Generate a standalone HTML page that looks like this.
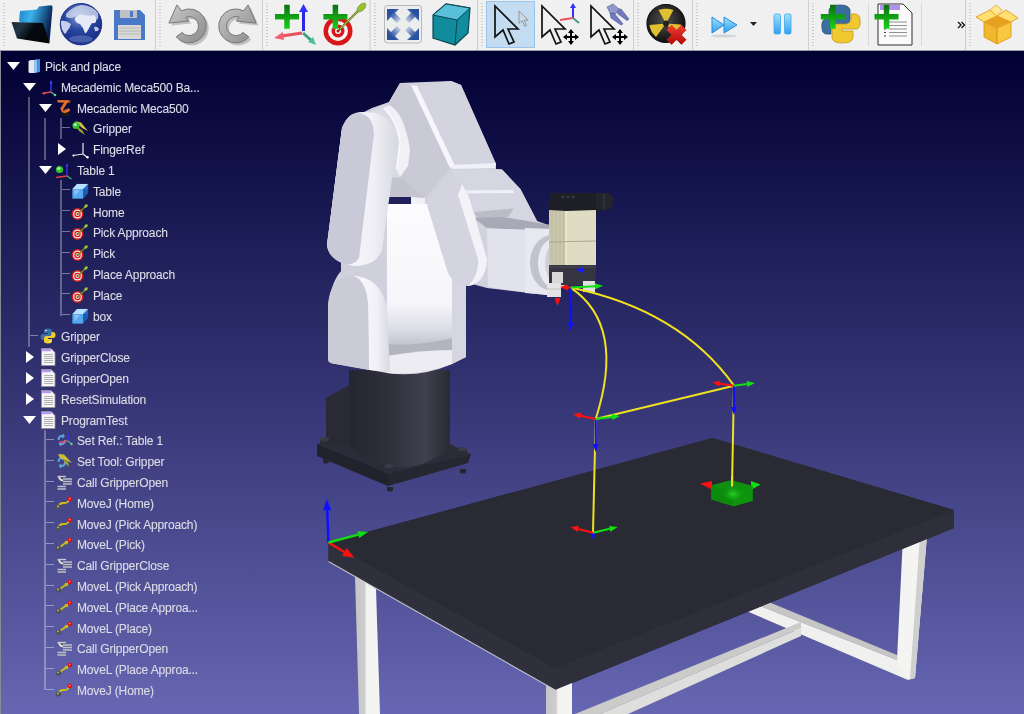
<!DOCTYPE html>
<html><head><meta charset="utf-8">
<style>
html,body{margin:0;padding:0;}
body{width:1024px;height:714px;overflow:hidden;position:relative;background:#f0f0f0;font-family:"Liberation Sans",sans-serif;}
#tb{position:absolute;left:0;top:0;width:1024px;height:50px;background:#f0f0f0;}
#vp{position:absolute;left:0;top:51px;width:1024px;height:663px;background:linear-gradient(#000033,#6666b2);}
#vpl{position:absolute;left:0;top:51px;width:1px;height:663px;background:#8a8a96;}
#vpt{position:absolute;left:0;top:50px;width:1024px;height:1px;background:#9a9aa6;}
.r{will-change:transform;position:absolute;height:20px;font-size:12px;letter-spacing:-0.15px;color:#dcdce6;-webkit-text-stroke:0.12px #dcdce6;white-space:nowrap;line-height:20px;}
.ln{position:absolute;background:rgba(255,255,255,0.4);}
svg{position:absolute;overflow:visible;}
</style></head><body>
<div id="tb">
<svg style="left:0;top:0" width="1024" height="50"><defs><radialGradient id="glb" cx="0.45" cy="0.3" r="0.75"><stop offset="0" stop-color="#8aa0d8"/><stop offset="0.45" stop-color="#2a48a0"/><stop offset="0.85" stop-color="#1a3088"/><stop offset="1" stop-color="#2a48a8"/></radialGradient><linearGradient id="fold" x1="0" y1="0" x2="1" y2="0.3"><stop offset="0" stop-color="#2080c8"/><stop offset="0.4" stop-color="#3ab4ec"/><stop offset="1" stop-color="#082050"/></linearGradient><linearGradient id="foldf" x1="0" y1="0" x2="1" y2="0.4"><stop offset="0" stop-color="#1a2a3a"/><stop offset="0.3" stop-color="#223444"/><stop offset="0.6" stop-color="#060a10"/><stop offset="1" stop-color="#04060a"/></linearGradient><linearGradient id="und" x1="0" y1="0" x2="1" y2="1"><stop offset="0" stop-color="#c8c8c8"/><stop offset="1" stop-color="#8a8a8a"/></linearGradient><linearGradient id="und2" x1="1" y1="0" x2="0" y2="1"><stop offset="0" stop-color="#c8c8c8"/><stop offset="1" stop-color="#8a8a8a"/></linearGradient><linearGradient id="pls" x1="0" y1="0" x2="0" y2="1"><stop offset="0" stop-color="#0a7010"/><stop offset="1" stop-color="#18d018"/></linearGradient><linearGradient id="cub" x1="0" y1="0" x2="0" y2="1"><stop offset="0" stop-color="#60c8e0"/><stop offset="1" stop-color="#108aa0"/></linearGradient><linearGradient id="ff" x1="0" y1="0" x2="0" y2="1"><stop offset="0" stop-color="#a0e0ff"/><stop offset="1" stop-color="#30a0f0"/></linearGradient><linearGradient id="box" x1="0" y1="0" x2="0" y2="1"><stop offset="0" stop-color="#ffe890"/><stop offset="1" stop-color="#f0b020"/></linearGradient><linearGradient id="fa1" x1="0" y1="0" x2="1" y2="1"><stop offset="0.3" stop-color="#2850a0"/><stop offset="1" stop-color="#2850a0" stop-opacity="0"/></linearGradient><linearGradient id="fa2" x1="1" y1="0" x2="0" y2="1"><stop offset="0.3" stop-color="#2850a0"/><stop offset="1" stop-color="#2850a0" stop-opacity="0"/></linearGradient><linearGradient id="fa3" x1="0" y1="1" x2="1" y2="0"><stop offset="0.3" stop-color="#2850a0"/><stop offset="1" stop-color="#2850a0" stop-opacity="0"/></linearGradient><linearGradient id="fa4" x1="1" y1="1" x2="0" y2="0"><stop offset="0.3" stop-color="#2850a0"/><stop offset="1" stop-color="#2850a0" stop-opacity="0"/></linearGradient><linearGradient id="xr" x1="0" y1="0" x2="0" y2="1"><stop offset="0" stop-color="#f04030"/><stop offset="1" stop-color="#b00808"/></linearGradient><radialGradient id="rad" cx="0.45" cy="0.4" r="0.6"><stop offset="0" stop-color="#505050"/><stop offset="1" stop-color="#101010"/></radialGradient></defs><path d="M155.5 0V50" stroke="#cfcfcf" stroke-width="1"/><path d="M262.5 0V50" stroke="#cfcfcf" stroke-width="1"/><path d="M370 0V50" stroke="#cfcfcf" stroke-width="1"/><path d="M477.5 0V50" stroke="#cfcfcf" stroke-width="1"/><path d="M633.5 0V50" stroke="#cfcfcf" stroke-width="1"/><path d="M692.5 0V50" stroke="#cfcfcf" stroke-width="1"/><path d="M808.5 0V50" stroke="#cfcfcf" stroke-width="1"/><path d="M965.5 0V50" stroke="#cfcfcf" stroke-width="1"/><path d="M868.5 3V46" stroke="#d8d8d8" stroke-width="1"/><path d="M921.5 3V46" stroke="#d8d8d8" stroke-width="1"/><path d="M4 3V46" stroke="#a8a8a8" stroke-width="1" stroke-dasharray="1 2"/><path d="M160 3V46" stroke="#a8a8a8" stroke-width="1" stroke-dasharray="1 2"/><path d="M267 3V46" stroke="#a8a8a8" stroke-width="1" stroke-dasharray="1 2"/><path d="M375 3V46" stroke="#a8a8a8" stroke-width="1" stroke-dasharray="1 2"/><path d="M482 3V46" stroke="#a8a8a8" stroke-width="1" stroke-dasharray="1 2"/><path d="M638 3V46" stroke="#a8a8a8" stroke-width="1" stroke-dasharray="1 2"/><path d="M697 3V46" stroke="#a8a8a8" stroke-width="1" stroke-dasharray="1 2"/><path d="M813 3V46" stroke="#a8a8a8" stroke-width="1" stroke-dasharray="1 2"/><path d="M970 3V46" stroke="#a8a8a8" stroke-width="1" stroke-dasharray="1 2"/><path d="M20 11L37 9.5L39 6.5L51 5.3Q53 5.5 52.5 8L49.5 43L19 21Z" fill="url(#fold)"/><path d="M11.5 22L43 23L49.5 43.5L17 38.5Z" fill="url(#foldf)"/><circle cx="81" cy="24.2" r="20.7" fill="url(#glb)" stroke="#20308a" stroke-width="1"/><path d="M66 14Q72 7 81 5Q92 5 98 13Q99 18 97 20Q94 16 90 17Q87 19 84 17Q79 14 75 17Q70 19 66 17Z" fill="#dce2f4" opacity="0.75"/><path d="M75 18Q79 13 84 15Q90 16 94 15Q97 18 96 22Q94 24 92 23Q90 26 88 30Q86 34 85 33Q83 27 80 24Q76 23 75 20Z" fill="#e6eaf6"/><path d="M61 21Q66 20 71 24Q70 28 67 31Q66 35 64 33Q61 29 61 24Z" fill="#c8d0ec"/><path d="M94 27Q97 26 99 29Q98 32 95 31Z" fill="#c0c8e8"/><ellipse cx="81" cy="39" rx="12" ry="3.5" fill="#7088c8" opacity="0.5"/><path d="M114 10H140L145 15V40H114Z" fill="#4a78c8"/><rect x="120" y="10" width="17" height="8" fill="#c0c0c0"/><rect x="130" y="11" width="3" height="6" fill="#4a78c8"/><rect x="118" y="25" width="23" height="14" fill="#d8d8d8"/><path d="M119 28H140M119 31H140M119 34H140" stroke="#b0b0b0" stroke-width="0.8"/><path transform="translate(2.5,2.5)" d="M176.9 4.9L168.9 23.1L188.8 21L185.8 17.1A9.5 9.5 0 1 1 182 32.5L176.2 36.8A17 17 0 1 0 181.5 10.8Z" fill="#b4b4b4" opacity="0.8"/><path d="M176.9 4.9L168.9 23.1L188.8 21L185.8 17.1A9.5 9.5 0 1 1 182 32.5L176.2 36.8A17 17 0 1 0 181.5 10.8Z" fill="url(#und)" stroke="#787878" stroke-width="1"/><g transform="translate(427.5,2.5) scale(-1,1)"><path d="M176.9 4.9L168.9 23.1L188.8 21L185.8 17.1A9.5 9.5 0 1 1 182 32.5L176.2 36.8A17 17 0 1 0 181.5 10.8Z" fill="#b4b4b4" opacity="0.8"/></g><g transform="translate(425,0) scale(-1,1)"><path d="M176.9 4.9L168.9 23.1L188.8 21L185.8 17.1A9.5 9.5 0 1 1 182 32.5L176.2 36.8A17 17 0 1 0 181.5 10.8Z" fill="url(#und2)" stroke="#787878" stroke-width="1"/></g><path d="M303.5 31V10" stroke="#2828e8" stroke-width="3"/><path d="M303.5 4L299 12H308Z" fill="#3030ff"/><path d="M302 33L282 36" stroke="#e85060" stroke-width="3"/><path d="M274 38L283 32L284 40Z" fill="#f06070"/><path d="M303 33L312 41" stroke="#40a080" stroke-width="3"/><path d="M316 45L308 42L313 37Z" fill="#50c090"/><path d="M284.25 4.800000000000001H289.75V14.05H299V19.55H289.75V28.8H284.25V19.55H275V14.05H284.25Z" fill="url(#pls)"/><circle cx="338" cy="31" r="14.5" fill="#d81818"/><circle cx="338" cy="31" r="10" fill="#f4f4f4"/><circle cx="338" cy="31" r="6.5" fill="#d81818"/><circle cx="338" cy="31" r="3" fill="#f4f4f4"/><circle cx="338" cy="31" r="1.5" fill="#c01010"/><path d="M339 30L359 10" stroke="#405020" stroke-width="2.2"/><path d="M340 29L359 10" stroke="#a0c040" stroke-width="1.2"/><ellipse cx="361.5" cy="7.5" rx="5.5" ry="3" transform="rotate(-45 361.5 7.5)" fill="#98c030" stroke="#6a8a20" stroke-width="0.6"/><path d="M332.65 4.800000000000001H338.15V14.05H347.4V19.55H338.15V28.8H332.65V19.55H323.4V14.05H332.65Z" fill="url(#pls)"/><rect x="384.5" y="5.5" width="37" height="37.5" rx="3" fill="#eceeee" stroke="#b8b8b8"/><path d="M387 9H399L395 13L401 19L397 23L391 17L387 21Z" fill="url(#fa1)"/><path d="M419 9H407L411 13L405 19L409 23L415 17L419 21Z" fill="url(#fa2)"/><path d="M387 40H399L395 36L401 30L397 26L391 32L387 28Z" fill="url(#fa3)"/><path d="M419 40H407L411 36L405 30L409 26L415 32L419 28Z" fill="url(#fa4)"/><path d="M433 15L446 4L470 8L468 33L455 45L433 38Z" fill="#108c9c" stroke="#0a4850" stroke-width="1.2"/><path d="M433 15L446 4L470 8L457 20Z" fill="#58c0d8" stroke="#0a4850" stroke-width="1"/><path d="M457 20L455 45" stroke="#0a4850" stroke-width="1"/><rect x="486.5" y="1.5" width="48" height="46" fill="#c4dcf2" stroke="#99c4ec"/><path transform="translate(495,6) scale(1)" d="M0 0L0 31L8 24L14 38L19 36L13 23L23 23Z" fill="none" stroke="#111" stroke-width="1.7" stroke-linejoin="miter"/><path transform="translate(519,11) scale(0.4)" d="M0 0L0 31L8 24L14 38L19 36L13 23L23 23Z" fill="#d0d8e0" stroke="#808890" stroke-width="2"/><path transform="translate(542,6) scale(1)" d="M0 0L0 31L8 24L14 38L19 36L13 23L23 23Z" fill="none" stroke="#111" stroke-width="1.7" stroke-linejoin="miter"/><path d="M573 18V6" stroke="#3030ff" stroke-width="2"/><path d="M573 3L570 8H576Z" fill="#3030ff"/><path d="M573 18L560 20" stroke="#e85060" stroke-width="2"/><path d="M573 18L579 23" stroke="#40a080" stroke-width="2"/><path transform="translate(591,6) scale(1)" d="M0 0L0 31L8 24L14 38L19 36L13 23L23 23Z" fill="none" stroke="#111" stroke-width="1.7" stroke-linejoin="miter"/><path d="M616 9L621 9L629 19L627 20.5L618 14Z" fill="#7078c0" stroke="#505890" stroke-width="0.6"/><path d="M610 13L614 13L623 24L621 25L611 18Z" fill="#7078c0" stroke="#505890" stroke-width="0.6"/><path d="M607 7L613 4L619 9L616 13.5L610 13Z" fill="#9098cc" stroke="#505890" stroke-width="0.6"/><path d="M564 37H578M571 30V44" stroke="#000" stroke-width="2"/><path d="M563 37L567 34V40Z M579 37L575 34V40Z M571 29L568 33H574Z M571 45L568 41H574Z" fill="#000"/><path d="M613 37H627M620 30V44" stroke="#000" stroke-width="2"/><path d="M612 37L616 34V40Z M628 37L624 34V40Z M620 29L617 33H623Z M620 45L617 41H623Z" fill="#000"/><circle cx="666" cy="23.5" r="19" fill="url(#rad)"/><path d="M666 23.5L658.5 10Q666 7.5 673.5 10Z M666 23.5L681 24.5Q680.5 32 676 37Z M666 23.5L656 37Q650.5 32 649.5 25Z" fill="#e0c030"/><circle cx="666" cy="23.5" r="19" fill="none" stroke="#111" stroke-width="1.2"/><circle cx="666" cy="23.5" r="3" fill="#222"/><polygon points="681.4,44.8 666.5,29.9 671.6,24.8 686.5,39.7" fill="url(#xr)"/><polygon points="686.5,29.9 671.6,44.8 666.5,39.7 681.4,24.8" fill="url(#xr)"/><path d="M712 17L724 25L712 33Z M724 17L737 25L724 33Z" fill="url(#ff)" stroke="#2a8ad8" stroke-width="1"/><ellipse cx="724" cy="36" rx="13" ry="1.5" fill="#c8c8c8" opacity="0.7"/><path d="M750 22H757L753.5 26Z" fill="#222"/><rect x="774" y="14" width="6.5" height="20" rx="1.5" fill="url(#ff)" stroke="#40a8e8" stroke-width="0.8"/><rect x="784.5" y="14" width="6.5" height="20" rx="1.5" fill="url(#ff)" stroke="#40a8e8" stroke-width="0.8"/><path d="M840 5Q830 5 829 10V17H840V19H825Q821 21 822 28Q822 34 827 34H831V28Q832 24 836 24H846Q850 23 850 19V10Q849 5 840 5Z" fill="#3a6ea0" stroke="#28507a" stroke-width="0.8"/><path d="M842 43Q852 43 853 38V31H842V29H857Q861 27 860 20Q860 14 855 14H851V20Q850 24 846 24H836Q832 25 832 29V38Q833 43 842 43Z" fill="#f0c830" stroke="#c09820" stroke-width="0.8"/><path d="M830.05 4.800000000000001H835.55V14.05H844.8V19.55H835.55V28.8H830.05V19.55H820.8V14.05H830.05Z" fill="url(#pls)"/><path d="M878 4H903L912 13V45H878Z" fill="#fafafa" stroke="#303030" stroke-width="1"/><rect x="880" y="5" width="20" height="5" fill="#b090f0"/><path d="M889 22H907M889 25.5H907M889 29H907M889 32.5H907M889 36H907" stroke="#909090" stroke-width="1.2"/><path d="M884 29H886M884 32.5H886M884 36H886" stroke="#404040" stroke-width="1.2"/><path d="M883.75 4.800000000000001H889.25V14.05H898.5V19.55H889.25V28.8H883.75V19.55H874.5V14.05H883.75Z" fill="url(#pls)"/><path d="M958 22L961 25L958 28M961.5 22L964.5 25L961.5 28" stroke="#111" stroke-width="1.3" fill="none"/><path d="M984 22L997 28V44L984 37Z" fill="#f0b830" stroke="#e09010" stroke-width="0.8"/><path d="M997 28L1011 22V37L997 44Z" fill="#f8c840" stroke="#e09010" stroke-width="0.8"/><path d="M984 22L997 16L1011 22L997 28Z" fill="#e8a020"/><path d="M984 22L976 17L990 10L997 16Z M1011 22L1018 18L1006 10L997 16Z" fill="#ffe070" stroke="#e09010" stroke-width="0.8"/><path d="M990 10L996 5L1002 10L997 16Z" fill="#ffe890" stroke="#e09010" stroke-width="0.6"/></svg>
</div>
<div id="vp"></div>
<div id="vpt"></div>
<div id="vpl"></div>
<svg width="1024" height="714" style="left:0;top:0"><defs><linearGradient id="cyl" x1="0" x2="1" y1="0" y2="0"><stop offset="0" stop-color="#262632"/><stop offset="0.35" stop-color="#2e2e3a"/><stop offset="0.75" stop-color="#40404e"/><stop offset="1" stop-color="#2a2a36"/></linearGradient><linearGradient id="legL" x1="0" x2="1"><stop offset="0" stop-color="#c4c4c4"/><stop offset="0.4" stop-color="#cfcfcf"/><stop offset="0.45" stop-color="#f2f2f0"/><stop offset="1" stop-color="#f4f4f2"/></linearGradient><linearGradient id="scyl" x1="0" x2="0" y1="0" y2="1"><stop offset="0" stop-color="#fcfcfe"/><stop offset="0.7" stop-color="#f6f6fa"/><stop offset="0.9" stop-color="#dcdce6"/><stop offset="1" stop-color="#c4c4d0"/></linearGradient></defs><polygon points="730,586 897,655 902,662 730,594" fill="#c6c6c4" /><polygon points="730,594 902,662 908,680 730,604" fill="#f0f0ee" /><polygon points="903,536 927,536 915,678 908,680 897,660" fill="#f4f4f2" /><polygon points="920,536 927,536 915,678 910,679" fill="#cfcfcd" /><polygon points="801,622 575,714 600,714 801,628" fill="#cbcbc9" /><polygon points="801,628 600,714 628,714 801,636" fill="#dededc" /><polygon points="328.5,542.5 712.5,438 954,510 954,528 555,690 328.5,561.5" fill="#30303c" /><polygon points="328.5,542.5 555,668 555,690 328.5,561.5" fill="#30303c" /><polygon points="555,668 954,510 954,528 555,690" fill="#2f2f3b" /><polygon points="328.5,542.5 712.5,438 954,510 555,668" fill="#2a2a35" /><path d="M328.5 561.5L555 690" stroke="#d8d8e0" stroke-width="1.1" opacity="0.85"/><polygon points="355,576 376,589 380,714 359,714" fill="url(#legL)" /><polygon points="546,685 555,690 572,683 572,714 546,714" fill="url(#legL)" /><polygon points="317,444 400,420 471,454 388,473" fill="#2c2c38" /><polygon points="317,444 388,473 388,486 317,456" fill="#22222c" /><polygon points="388,473 471,454 468,463 388,486" fill="#262630" /><polygon points="326,398 349,385 349,446 326,444" fill="#2a2a34" /><path d="M349 370V446Q400 488 450 448V370Z" fill="url(#cyl)"/><path d="M320.0 445V439H329.0V445Z" fill="#2c2c38"/><ellipse cx="324.5" cy="445" rx="4.5" ry="2" fill="#2c2c38"/><ellipse cx="324.5" cy="439" rx="4.5" ry="2" fill="#3a3a48"/><path d="M384.5 472V466H393.5V472Z" fill="#2c2c38"/><ellipse cx="389" cy="472" rx="4.5" ry="2" fill="#2c2c38"/><ellipse cx="389" cy="466" rx="4.5" ry="2" fill="#3a3a48"/><path d="M458.0 455V449H467.0V455Z" fill="#2c2c38"/><ellipse cx="462.5" cy="455" rx="4.5" ry="2" fill="#2c2c38"/><ellipse cx="462.5" cy="449" rx="4.5" ry="2" fill="#3a3a48"/><path d="M323 459V462H329V459Z" fill="#262630"/><ellipse cx="326" cy="462" rx="3" ry="1.5" fill="#262630"/><path d="M387 487V490H393V487Z" fill="#262630"/><ellipse cx="390" cy="490" rx="3" ry="1.5" fill="#262630"/><path d="M460 469V472H466V469Z" fill="#262630"/><ellipse cx="463" cy="472" rx="3" ry="1.5" fill="#262630"/><path d="M342 128L350 116L362 113L372 108L389 102L400 83L451 81L461 85L496 164L496 169L502 169.6L520.4 189L537 221L551 226L551 295L545 295L487 288L476 285L466 283L466 357L452 364Q420 378 387 373L331 363L328 358L328 305Q332 280 342 270L341 261Q327 252 327 245Z" fill="#d2d2de"/><polygon points="341,250 385,250 387,320 341,320" fill="#d0d0dc" /><polygon points="448,280 466,284 466,357 452,364 448,360" fill="#d6d6e2" /><path d="M387 204H452V338Q420 346 387 344Z" fill="url(#scyl)"/><path d="M387 344Q420 346 452 338V350Q420 358 387 358Z" fill="#b4b4c0"/><path d="M387 356Q420 350 452 350V364Q420 376 387 373Z" fill="#ececf2"/><polygon points="389,178 401,177 425,198 389,198" fill="#c4c4d0" /><polygon points="388,197 411,197 411,204 388,204" fill="#20205a" /><polygon points="411,197 425,198 425,204 411,204" fill="#f0f0f6" /><polygon points="400,83 414,87 451,166 450,168 425,198 401,177 389,102" fill="#cacad6" /><path d="M371 111Q380 106 389 105Q404 112 410 150L408 166L400 177L386 176Z" fill="#dadae4"/><path d="M384 108Q396 120 400 143L396.5 169L400 177L408 166L410 150Q404 112 389 105Z" fill="#f0f0f6"/><path d="M384 108Q398 122 400 143L396.5 169" stroke="#fafaff" stroke-width="1.5" fill="none"/><polygon points="414,87 451,81 461,85 496,164 494,168 452,168" fill="#d4d4e0" /><polygon points="411,85 417,86 455,166 450,168" fill="#f6f6fc" /><polygon points="452,165 496,163 495,168 452,169" fill="#f0f0f8" /><polygon points="452,170 502,169.6 520.4,189 537,221 474,220 460,200" fill="#d6d6e2" /><polygon points="462,190.5 513,190 514,193 464,193.5" fill="#f0f0f8" /><polygon points="474,212 514,208.5 508,217 478,219" fill="#bcbcc8" /><polygon points="474,218 503,217 551,225 551,230 488,229" fill="#a8a8b6" /><polygon points="487,228 525,230 525,292 488,287" fill="#e2e2ec" /><polygon points="525,228 551,229 551,295 525,293" fill="#e8e8f0" /><ellipse cx="552" cy="263" rx="22" ry="28" fill="#c2c2ce"/><ellipse cx="555" cy="263" rx="17" ry="25" fill="#eaeaf2"/><ellipse cx="557" cy="263" rx="12" ry="21" fill="#d0d0da"/><ellipse cx="559" cy="263" rx="9" ry="18" fill="#f0f0f6"/><path d="M452 176Q436 184 427 205L447 270Q452 286 468 286Q486 283 487 259L470 200Q462 180 452 176Z" fill="#d4d4e0"/><path d="M462 184Q466 190 470 200L487 259Q486 283 468 286Q479 276 478 259L458 195Z" fill="#f2f2f8"/><defs><linearGradient id="rim" x1="0" x2="1"><stop offset="0" stop-color="#fafafe"/><stop offset="0.65" stop-color="#f0f0f6"/><stop offset="1" stop-color="#d8d8e2"/></linearGradient></defs><path d="M342 128Q348 112 362 112L376 113Q393 118 397 143L382 250Q376 266 354 266Q330 262 327 245Z" fill="url(#rim)"/><path d="M342 128Q348 112 360 113Q373 116 374 134L359 258Q354 266 344 264Q328 258 327 245Z" fill="#c9c9d7"/><path d="M352 276Q380 276 387 308L390 372L369 370L368 305Q366 278 352 276Z" fill="url(#rim)"/><path d="M328 360L328 305Q330 277 352 276Q366 278 368 305L369 370L335 364Q328 363 328 360Z" fill="#cbcbd8"/><polygon points="550,193 600,193 600,212 550,212" fill="#1e1e26" /><path d="M596 193H606Q613 193 613 201Q613 210 606 210H596Z" fill="#24242c"/><path d="M604 194V209" stroke="#3a3a44" stroke-width="1.2"/><circle cx="563" cy="197" r="1.3" fill="#40404a"/><circle cx="568" cy="197" r="1.3" fill="#40404a"/><circle cx="573" cy="197" r="1.3" fill="#40404a"/><polygon points="549,210 566,211 566,265 549,265" fill="#cbc7ac" /><path d="M552 211V265M556 211V265M560 211V265M563.5 211V265" stroke="#bab69a" stroke-width="0.8"/><polygon points="566,211 596,210 596,265 566,265" fill="#e0dcc4" /><path d="M566 211V265" stroke="#f2f0e0" stroke-width="1.2"/><path d="M549 242L596 241" stroke="#aca890" stroke-width="1"/><polygon points="549,265 596,265 595,285 549,285" fill="#363642" /><path d="M549 267H596" stroke="#4a4a58" stroke-width="1"/><polygon points="576,270 583,267 583,273" fill="#1a1aff"/><polygon points="552,272 563,272 563,283 552,283" fill="#d8d8d8" /><polygon points="547,283 561,283 561,297 547,297" fill="#e4e4e4" /><path d="M547 289H561" stroke="#b8b8b8" stroke-width="0.8"/><polygon points="583,281 595,281 595,292 583,292" fill="#e0e0e0" /><polygon points="554.5,298 560.5,298 557.5,306" fill="#ff1010"/><path d="M570.6 287.6Q626 325 595.7 419" stroke="#f0e020" stroke-width="2" fill="none"/><path d="M570.6 287.6Q680 310 734 385.7" stroke="#f0e020" stroke-width="2" fill="none"/><path d="M595.7 419L734 385.7M595.7 419L593 532.7M734 385.7L732 485.7" stroke="#f0e020" stroke-width="2" fill="none"/><path d="M595.7 419.0L595.7 444.0" stroke="#1010ff" stroke-width="2"/><polygon points="595.7,452.0 592.7,444.0 598.7,444.0" fill="#1010ff"/><path d="M595.7 419.0L580.8 415.7" stroke="#ff1010" stroke-width="2"/><polygon points="573.0,414.0 581.5,412.8 580.2,418.7" fill="#ff1010"/><path d="M595.7 419.0L612.1 417.0" stroke="#10e010" stroke-width="2"/><polygon points="620.0,416.0 612.4,420.0 611.7,414.0" fill="#10e010"/><path d="M734.0 385.7L734.0 407.0" stroke="#1010ff" stroke-width="2"/><polygon points="734.0,415.0 731.0,407.0 737.0,407.0" fill="#1010ff"/><path d="M734.0 385.7L719.9 383.7" stroke="#ff1010" stroke-width="2"/><polygon points="712.0,382.5 720.3,380.7 719.5,386.6" fill="#ff1010"/><path d="M734.0 385.7L747.1 384.0" stroke="#10e010" stroke-width="2"/><polygon points="755.0,383.0 747.4,387.0 746.7,381.0" fill="#10e010"/><path d="M570.6 287.6L570.6 323.0" stroke="#1010ff" stroke-width="2"/><polygon points="570.6,331.0 567.6,323.0 573.6,323.0" fill="#1010ff"/><path d="M570.6 287.6L568.0 287.5" stroke="#ff1010" stroke-width="2"/><polygon points="560.0,287.0 568.2,284.5 567.8,290.4" fill="#ff1010"/><path d="M570.6 287.6L595.0 286.2" stroke="#10e010" stroke-width="2"/><polygon points="603.0,285.7 595.2,289.2 594.8,283.2" fill="#10e010"/><path d="M593.0 532.7L593.0 532.0" stroke="#1010ff" stroke-width="2"/><polygon points="593.0,540.0 590.0,532.0 596.0,532.0" fill="#1010ff"/><path d="M593.0 532.7L578.4 529.0" stroke="#ff1010" stroke-width="2"/><polygon points="570.6,527.0 579.1,526.1 577.6,531.9" fill="#ff1010"/><path d="M593.0 532.7L609.8 528.8" stroke="#10e010" stroke-width="2"/><polygon points="617.6,527.0 610.5,531.7 609.1,525.9" fill="#10e010"/><path d="M328.5 542.5L327.2 510.3" stroke="#1010ff" stroke-width="2.5"/><polygon points="326.8,499.3 331.2,510.1 323.2,510.4" fill="#1010ff"/><path d="M328.5 542.5L344.5 552.0" stroke="#ff1010" stroke-width="2.5"/><polygon points="354.0,557.6 342.2,555.9 346.8,548.1" fill="#ff1010"/><path d="M328.5 542.5L358.3 534.6" stroke="#10e010" stroke-width="2.5"/><polygon points="368.0,532.0 359.2,538.0 357.4,531.2" fill="#10e010"/><polygon points="700,483.5 712,481 712,489.5" fill="#ff1010"/><polygon points="760.5,484.5 751,481 751,490" fill="#10e010"/><polygon points="711.4,485.6 731.2,480.2 752.6,486 752.6,500.8 733.7,506.2 711.4,499.5" fill="#0e900e" /><polygon points="711.4,485.6 731.2,480.2 752.6,486 733.7,491" fill="#109010" /><polygon points="711.4,485.6 733.7,491 733.7,506.2 711.4,499.5" fill="#0c8a0c" /><polygon points="733.7,491 752.6,486 752.6,500.8 733.7,506.2" fill="#0e940e" /><defs><radialGradient id="gbx"><stop offset="0" stop-color="#28e028" stop-opacity="0.85"/><stop offset="1" stop-color="#10a010" stop-opacity="0"/></radialGradient></defs><ellipse cx="733" cy="494" rx="11" ry="8" fill="url(#gbx)"/><path d="M732.2 476L732 486.5" stroke="#f0e020" stroke-width="2"/></svg>
<div class="ln" style="left:28px;top:97px;width:2px;height:250px;background:rgba(255,255,255,0.3)"></div>
<div class="ln" style="left:30px;top:335px;width:8px;height:1px"></div>
<div class="ln" style="left:44px;top:118px;width:2px;height:42px;background:rgba(255,255,255,0.3)"></div>
<div class="ln" style="left:60px;top:118px;width:2px;height:21px;background:rgba(255,255,255,0.3)"></div>
<div class="ln" style="left:62px;top:127px;width:8px;height:1px"></div>
<div class="ln" style="left:60px;top:180px;width:2px;height:136px;background:rgba(255,255,255,0.3)"></div>
<div class="ln" style="left:62px;top:189px;width:8px;height:1px"></div>
<div class="ln" style="left:62px;top:210px;width:8px;height:1px"></div>
<div class="ln" style="left:62px;top:231px;width:8px;height:1px"></div>
<div class="ln" style="left:62px;top:252px;width:8px;height:1px"></div>
<div class="ln" style="left:62px;top:273px;width:8px;height:1px"></div>
<div class="ln" style="left:62px;top:293px;width:8px;height:1px"></div>
<div class="ln" style="left:62px;top:314px;width:8px;height:1px"></div>
<div class="ln" style="left:44px;top:430px;width:2px;height:260px;background:rgba(255,255,255,0.3)"></div>
<div class="ln" style="left:46px;top:439px;width:8px;height:1px"></div>
<div class="ln" style="left:46px;top:460px;width:8px;height:1px"></div>
<div class="ln" style="left:46px;top:481px;width:8px;height:1px"></div>
<div class="ln" style="left:46px;top:501px;width:8px;height:1px"></div>
<div class="ln" style="left:46px;top:522px;width:8px;height:1px"></div>
<div class="ln" style="left:46px;top:543px;width:8px;height:1px"></div>
<div class="ln" style="left:46px;top:564px;width:8px;height:1px"></div>
<div class="ln" style="left:46px;top:585px;width:8px;height:1px"></div>
<div class="ln" style="left:46px;top:605px;width:8px;height:1px"></div>
<div class="ln" style="left:46px;top:626px;width:8px;height:1px"></div>
<div class="ln" style="left:46px;top:647px;width:8px;height:1px"></div>
<div class="ln" style="left:46px;top:668px;width:8px;height:1px"></div>
<div class="ln" style="left:46px;top:689px;width:8px;height:1px"></div>
<svg style="left:6.5px;top:62.0px" width="13" height="8"><path d="M0 0H13L6.5 8Z" fill="#fff"/></svg>
<svg style="left:24.0px;top:58.0px" width="16" height="16" viewBox="0 0 16 16"><path d="M4.5 3.5Q5 2 7 2H10V15H6Q4.5 15 4.5 13.5Z" fill="#e8e8ea"/><path d="M10 2L16 1V14L10 15Z" fill="#4a90e0"/><path d="M10 2L13 1.6V14.5L10 15Z" fill="#90c4f4"/></svg>
<div class="r" style="left:45px;top:57.0px">Pick and place</div>
<svg style="left:22.5px;top:82.8px" width="13" height="8"><path d="M0 0H13L6.5 8Z" fill="#fff"/></svg>
<svg style="left:40.0px;top:78.8px" width="16" height="16" viewBox="0 0 16 16"><path d="M11 13V3" stroke="#3838ff" stroke-width="1.4"/><path d="M11 1L9.5 4.5H12.5Z" fill="#4848ff"/><path d="M11 13L3 14.3" stroke="#e04858" stroke-width="1.4"/><path d="M1.5 14.5L4.5 13L4.8 15.8Z" fill="#f05060"/><path d="M11 13L15 16" stroke="#40b080" stroke-width="1.4"/><circle cx="15" cy="16" r="1.3" fill="#60d090"/></svg>
<div class="r" style="left:61px;top:77.8px">Mecademic Meca500 Ba...</div>
<svg style="left:38.5px;top:103.6px" width="13" height="8"><path d="M0 0H13L6.5 8Z" fill="#fff"/></svg>
<svg style="left:56.0px;top:99.6px" width="16" height="16" viewBox="0 0 16 16"><ellipse cx="10" cy="14" rx="4.5" ry="2" fill="#1a1a14"/><path d="M2.5 1.2L13.5 1.5" stroke="#e07028" stroke-width="2.6" stroke-linecap="round"/><path d="M10.5 1.5L6 8.5Q6.5 11.5 9 11.5L12.5 10" stroke="#e07028" stroke-width="3" fill="none" stroke-linejoin="round" stroke-linecap="round"/><circle cx="13.8" cy="1.6" r="1" fill="#402818"/><circle cx="7.8" cy="10" r="0.9" fill="#402818"/></svg>
<div class="r" style="left:77px;top:98.6px">Mecademic Meca500</div>
<svg style="left:72.0px;top:120.4px" width="16" height="16" viewBox="0 0 16 16"><path d="M3 1L9 2.5L16 11L10 8Z" fill="#c8c040"/><path d="M4 6L10 10L13 15L7 11Z" fill="#a8a028"/><circle cx="4" cy="5.5" r="3.6" fill="#30c030"/><circle cx="3.3" cy="4.6" r="1.6" fill="#b0f0b0"/></svg>
<div class="r" style="left:93px;top:119.4px">Gripper</div>
<svg style="left:57.5px;top:143.2px" width="8" height="12"><path d="M0 0V12L8 6Z" fill="#fff"/></svg>
<svg style="left:72.0px;top:141.2px" width="16" height="16" viewBox="0 0 16 16"><path d="M11 13V2M11 13L1 14.5M11 13L15.5 16.5" stroke="#e8e8e8" stroke-width="1.2"/><circle cx="1.5" cy="14.5" r="1.1" fill="#fff"/><circle cx="15.5" cy="16.3" r="1.2" fill="#fff"/></svg>
<div class="r" style="left:93px;top:140.2px">FingerRef</div>
<svg style="left:38.5px;top:166.0px" width="13" height="8"><path d="M0 0H13L6.5 8Z" fill="#fff"/></svg>
<svg style="left:56.0px;top:162.0px" width="16" height="16" viewBox="0 0 16 16"><circle cx="3.5" cy="7.5" r="3.6" fill="#30c030"/><circle cx="2.8" cy="6.5" r="1.6" fill="#a0f0a0"/><path d="M11 14V3" stroke="#3030ff" stroke-width="1.3"/><path d="M11 1L9.6 4.5H12.4Z" fill="#4040ff"/><path d="M11 14L0 15.5" stroke="#e04040" stroke-width="1.3"/><path d="M11 14L15.5 17" stroke="#40b080" stroke-width="1.3"/></svg>
<div class="r" style="left:77px;top:161.0px">Table 1</div>
<svg style="left:72.0px;top:182.8px" width="16" height="16" viewBox="0 0 16 16"><path d="M0.5 6L5 1H16V10L11 15.5H0.5Z" fill="#2a70c8" stroke="#204880" stroke-width="0.6"/><path d="M0.5 6L5 1H16L11 6Z" fill="#b8e0ff"/><path d="M11 6H16V10L11 15.5Z" fill="#1a5ab0"/><path d="M0.5 6H11V15.5H0.5Z" fill="#58a8f0"/><path d="M2 7L8 7L3 13Z" fill="#a8d4fa" opacity="0.6"/></svg>
<div class="r" style="left:93px;top:181.8px">Table</div>
<svg style="left:72.0px;top:203.6px" width="16" height="16" viewBox="0 0 16 16"><circle cx="5.5" cy="10" r="6" fill="#d81818"/><circle cx="5.5" cy="10" r="4.5" fill="#f0e8e8"/><circle cx="5.5" cy="10" r="3.2" fill="#d81818"/><circle cx="5.5" cy="10" r="2" fill="#f0e8e8"/><circle cx="5.5" cy="10" r="1" fill="#c01010"/><path d="M5.5 10L13 3" stroke="#709828" stroke-width="1.2"/><ellipse cx="14" cy="2" rx="2" ry="1.5" transform="rotate(-45 14 2)" fill="#a0c830"/></svg>
<div class="r" style="left:93px;top:202.6px">Home</div>
<svg style="left:72.0px;top:224.4px" width="16" height="16" viewBox="0 0 16 16"><circle cx="5.5" cy="10" r="6" fill="#d81818"/><circle cx="5.5" cy="10" r="4.5" fill="#f0e8e8"/><circle cx="5.5" cy="10" r="3.2" fill="#d81818"/><circle cx="5.5" cy="10" r="2" fill="#f0e8e8"/><circle cx="5.5" cy="10" r="1" fill="#c01010"/><path d="M5.5 10L13 3" stroke="#709828" stroke-width="1.2"/><ellipse cx="14" cy="2" rx="2" ry="1.5" transform="rotate(-45 14 2)" fill="#a0c830"/></svg>
<div class="r" style="left:93px;top:223.4px">Pick Approach</div>
<svg style="left:72.0px;top:245.2px" width="16" height="16" viewBox="0 0 16 16"><circle cx="5.5" cy="10" r="6" fill="#d81818"/><circle cx="5.5" cy="10" r="4.5" fill="#f0e8e8"/><circle cx="5.5" cy="10" r="3.2" fill="#d81818"/><circle cx="5.5" cy="10" r="2" fill="#f0e8e8"/><circle cx="5.5" cy="10" r="1" fill="#c01010"/><path d="M5.5 10L13 3" stroke="#709828" stroke-width="1.2"/><ellipse cx="14" cy="2" rx="2" ry="1.5" transform="rotate(-45 14 2)" fill="#a0c830"/></svg>
<div class="r" style="left:93px;top:244.2px">Pick</div>
<svg style="left:72.0px;top:266.0px" width="16" height="16" viewBox="0 0 16 16"><circle cx="5.5" cy="10" r="6" fill="#d81818"/><circle cx="5.5" cy="10" r="4.5" fill="#f0e8e8"/><circle cx="5.5" cy="10" r="3.2" fill="#d81818"/><circle cx="5.5" cy="10" r="2" fill="#f0e8e8"/><circle cx="5.5" cy="10" r="1" fill="#c01010"/><path d="M5.5 10L13 3" stroke="#709828" stroke-width="1.2"/><ellipse cx="14" cy="2" rx="2" ry="1.5" transform="rotate(-45 14 2)" fill="#a0c830"/></svg>
<div class="r" style="left:93px;top:265.0px">Place Approach</div>
<svg style="left:72.0px;top:286.8px" width="16" height="16" viewBox="0 0 16 16"><circle cx="5.5" cy="10" r="6" fill="#d81818"/><circle cx="5.5" cy="10" r="4.5" fill="#f0e8e8"/><circle cx="5.5" cy="10" r="3.2" fill="#d81818"/><circle cx="5.5" cy="10" r="2" fill="#f0e8e8"/><circle cx="5.5" cy="10" r="1" fill="#c01010"/><path d="M5.5 10L13 3" stroke="#709828" stroke-width="1.2"/><ellipse cx="14" cy="2" rx="2" ry="1.5" transform="rotate(-45 14 2)" fill="#a0c830"/></svg>
<div class="r" style="left:93px;top:285.8px">Place</div>
<svg style="left:72.0px;top:307.6px" width="16" height="16" viewBox="0 0 16 16"><path d="M0.5 6L5 1H16V10L11 15.5H0.5Z" fill="#2a70c8" stroke="#204880" stroke-width="0.6"/><path d="M0.5 6L5 1H16L11 6Z" fill="#b8e0ff"/><path d="M11 6H16V10L11 15.5Z" fill="#1a5ab0"/><path d="M0.5 6H11V15.5H0.5Z" fill="#58a8f0"/><path d="M2 7L8 7L3 13Z" fill="#a8d4fa" opacity="0.6"/></svg>
<div class="r" style="left:93px;top:306.6px">box</div>
<svg style="left:40.0px;top:328.4px" width="16" height="16" viewBox="0 0 16 16"><path d="M8 0.5Q4 0.5 4 3V5H8V6H3Q0.5 6 0.5 9Q0.5 12 3 12H4.5V10Q4.5 8 6.5 8H10Q12 8 12 6V3Q12 0.5 8 0.5Z" fill="#3a70a8"/><path d="M8 15.5Q12 15.5 12 13V11H8V10H13Q15.5 10 15.5 7Q15.5 4 13 4H11.5V6Q11.5 8 9.5 8H6Q4 8 4 10V13Q4 15.5 8 15.5Z" fill="#f0cc30"/><circle cx="6" cy="2.5" r="0.8" fill="#fff"/><circle cx="10" cy="13.5" r="0.8" fill="#fff"/></svg>
<div class="r" style="left:61px;top:327.4px">Gripper</div>
<svg style="left:25.5px;top:351.2px" width="8" height="12"><path d="M0 0V12L8 6Z" fill="#fff"/></svg>
<svg style="left:40.0px;top:348.2px" width="16" height="18" viewBox="0 0 16 18"><path d="M1.5 0.5H11L15 4.5V17.5H1.5Z" fill="#f6f6f6" stroke="#909098" stroke-width="0.8"/><rect x="2" y="1" width="9" height="2.2" fill="#b898f4"/><path d="M4 6.5H13M4 8.5H13M4 10.5H13M4 12.5H13M4 14.5H13" stroke="#b0b0b0" stroke-width="1"/></svg>
<div class="r" style="left:61px;top:348.2px">GripperClose</div>
<svg style="left:25.5px;top:372.0px" width="8" height="12"><path d="M0 0V12L8 6Z" fill="#fff"/></svg>
<svg style="left:40.0px;top:369.0px" width="16" height="18" viewBox="0 0 16 18"><path d="M1.5 0.5H11L15 4.5V17.5H1.5Z" fill="#f6f6f6" stroke="#909098" stroke-width="0.8"/><rect x="2" y="1" width="9" height="2.2" fill="#b898f4"/><path d="M4 6.5H13M4 8.5H13M4 10.5H13M4 12.5H13M4 14.5H13" stroke="#b0b0b0" stroke-width="1"/></svg>
<div class="r" style="left:61px;top:369.0px">GripperOpen</div>
<svg style="left:25.5px;top:392.8px" width="8" height="12"><path d="M0 0V12L8 6Z" fill="#fff"/></svg>
<svg style="left:40.0px;top:389.8px" width="16" height="18" viewBox="0 0 16 18"><path d="M1.5 0.5H11L15 4.5V17.5H1.5Z" fill="#f6f6f6" stroke="#909098" stroke-width="0.8"/><rect x="2" y="1" width="9" height="2.2" fill="#b898f4"/><path d="M4 6.5H13M4 8.5H13M4 10.5H13M4 12.5H13M4 14.5H13" stroke="#b0b0b0" stroke-width="1"/></svg>
<div class="r" style="left:61px;top:389.8px">ResetSimulation</div>
<svg style="left:22.5px;top:415.6px" width="13" height="8"><path d="M0 0H13L6.5 8Z" fill="#fff"/></svg>
<svg style="left:40.0px;top:410.6px" width="16" height="18" viewBox="0 0 16 18"><path d="M1.5 0.5H11L15 4.5V17.5H1.5Z" fill="#f6f6f6" stroke="#909098" stroke-width="0.8"/><rect x="2" y="1" width="9" height="2.2" fill="#b898f4"/><path d="M4 6.5H13M4 8.5H13M4 10.5H13M4 12.5H13M4 14.5H13" stroke="#b0b0b0" stroke-width="1"/></svg>
<div class="r" style="left:61px;top:410.6px">ProgramTest</div>
<svg style="left:56.0px;top:432.4px" width="16" height="16" viewBox="0 0 16 16"><path d="M1.5 8Q1.5 3 6 3L7 1.5L9 4.5L6 6.5V5Q3.5 5 3.5 8Z" fill="#60a0d8"/><path d="M10 8Q10 13 5.5 13L4.5 14.5L2.5 11.5L5.5 9.5V11Q8 11 8 8Z" fill="#60a0d8"/><path d="M12 9V2" stroke="#3030ff" stroke-width="1.3"/><path d="M12 9L3 10.5" stroke="#e04858" stroke-width="1.3"/><path d="M12 9L15.5 12" stroke="#40b080" stroke-width="1.3"/><circle cx="15.5" cy="12" r="1.2" fill="#60d090"/></svg>
<div class="r" style="left:77px;top:431.4px">Set Ref.: Table 1</div>
<svg style="left:56.0px;top:453.2px" width="16" height="16" viewBox="0 0 16 16"><path d="M1.5 9Q1.5 4 6 4L7 2.5L9 5.5L6 7.5V6Q3.5 6 3.5 9Z" fill="#60a0d8"/><path d="M10 9Q10 14 5.5 14L4.5 15.5L2.5 12.5L5.5 10.5V12Q8 12 8 9Z" fill="#60a0d8"/><path d="M2 1L8 1.5L16 10L9 7L4 5Z" fill="#c8c030"/><path d="M7 6L12 9L13 14L9 10Z" fill="#a8a020"/></svg>
<div class="r" style="left:77px;top:452.2px">Set Tool: Gripper</div>
<svg style="left:56.0px;top:474.0px" width="16" height="16" viewBox="0 0 16 16"><path d="M1.5 2.5H10" stroke="#c8c8c8" stroke-width="1.4"/><path d="M3 3Q3.5 6 7 6.5" stroke="#f0e8c0" stroke-width="1.6" fill="none"/><path d="M7 5H16M7 7.5H16M7 10H16" stroke="#c0c0c4" stroke-width="1.5"/><path d="M1.5 12.5H10M1.5 15H10" stroke="#c0c0c4" stroke-width="1.5"/></svg>
<div class="r" style="left:77px;top:473.0px">Call GripperOpen</div>
<svg style="left:56.0px;top:494.8px" width="16" height="16" viewBox="0 0 16 16"><path d="M2.5 11Q4 8 7 8Q10 8 11 7.5Q13 6 13.5 4" stroke="#d0c010" stroke-width="1.8" fill="none"/><circle cx="2.5" cy="12" r="2.6" fill="#505050"/><circle cx="2" cy="11.4" r="0.9" fill="#c0c0c0"/><circle cx="14" cy="4" r="2.3" fill="#e01010"/><circle cx="13.7" cy="3.6" r="0.8" fill="#ff9090"/></svg>
<div class="r" style="left:77px;top:493.8px">MoveJ (Home)</div>
<svg style="left:56.0px;top:515.6px" width="16" height="16" viewBox="0 0 16 16"><path d="M2.5 11Q4 8 7 8Q10 8 11 7.5Q13 6 13.5 4" stroke="#d0c010" stroke-width="1.8" fill="none"/><circle cx="2.5" cy="12" r="2.6" fill="#505050"/><circle cx="2" cy="11.4" r="0.9" fill="#c0c0c0"/><circle cx="14" cy="4" r="2.3" fill="#e01010"/><circle cx="13.7" cy="3.6" r="0.8" fill="#ff9090"/></svg>
<div class="r" style="left:77px;top:514.6px">MoveJ (Pick Approach)</div>
<svg style="left:56.0px;top:536.4px" width="16" height="16" viewBox="0 0 16 16"><path d="M2.5 12L11.5 5.5" stroke="#d0c010" stroke-width="1.8"/><path d="M13 4.5L8.5 5.5L11 8.8Z" fill="#d0c010"/><circle cx="2.5" cy="12" r="2.6" fill="#505050"/><circle cx="2" cy="11.4" r="0.9" fill="#c0c0c0"/><circle cx="14" cy="4" r="2.3" fill="#e01010"/><circle cx="13.7" cy="3.6" r="0.8" fill="#ff9090"/></svg>
<div class="r" style="left:77px;top:535.4px">MoveL (Pick)</div>
<svg style="left:56.0px;top:557.2px" width="16" height="16" viewBox="0 0 16 16"><path d="M1.5 2.5H10" stroke="#c8c8c8" stroke-width="1.4"/><path d="M3 3Q3.5 6 7 6.5" stroke="#f0e8c0" stroke-width="1.6" fill="none"/><path d="M7 5H16M7 7.5H16M7 10H16" stroke="#c0c0c4" stroke-width="1.5"/><path d="M1.5 12.5H10M1.5 15H10" stroke="#c0c0c4" stroke-width="1.5"/></svg>
<div class="r" style="left:77px;top:556.2px">Call GripperClose</div>
<svg style="left:56.0px;top:578.0px" width="16" height="16" viewBox="0 0 16 16"><path d="M2.5 12L11.5 5.5" stroke="#d0c010" stroke-width="1.8"/><path d="M13 4.5L8.5 5.5L11 8.8Z" fill="#d0c010"/><circle cx="2.5" cy="12" r="2.6" fill="#505050"/><circle cx="2" cy="11.4" r="0.9" fill="#c0c0c0"/><circle cx="14" cy="4" r="2.3" fill="#e01010"/><circle cx="13.7" cy="3.6" r="0.8" fill="#ff9090"/></svg>
<div class="r" style="left:77px;top:577.0px">MoveL (Pick Approach)</div>
<svg style="left:56.0px;top:598.8px" width="16" height="16" viewBox="0 0 16 16"><path d="M2.5 12L11.5 5.5" stroke="#d0c010" stroke-width="1.8"/><path d="M13 4.5L8.5 5.5L11 8.8Z" fill="#d0c010"/><circle cx="2.5" cy="12" r="2.6" fill="#505050"/><circle cx="2" cy="11.4" r="0.9" fill="#c0c0c0"/><circle cx="14" cy="4" r="2.3" fill="#e01010"/><circle cx="13.7" cy="3.6" r="0.8" fill="#ff9090"/></svg>
<div class="r" style="left:77px;top:597.8px">MoveL (Place Approa...</div>
<svg style="left:56.0px;top:619.6px" width="16" height="16" viewBox="0 0 16 16"><path d="M2.5 12L11.5 5.5" stroke="#d0c010" stroke-width="1.8"/><path d="M13 4.5L8.5 5.5L11 8.8Z" fill="#d0c010"/><circle cx="2.5" cy="12" r="2.6" fill="#505050"/><circle cx="2" cy="11.4" r="0.9" fill="#c0c0c0"/><circle cx="14" cy="4" r="2.3" fill="#e01010"/><circle cx="13.7" cy="3.6" r="0.8" fill="#ff9090"/></svg>
<div class="r" style="left:77px;top:618.6px">MoveL (Place)</div>
<svg style="left:56.0px;top:640.4px" width="16" height="16" viewBox="0 0 16 16"><path d="M1.5 2.5H10" stroke="#c8c8c8" stroke-width="1.4"/><path d="M3 3Q3.5 6 7 6.5" stroke="#f0e8c0" stroke-width="1.6" fill="none"/><path d="M7 5H16M7 7.5H16M7 10H16" stroke="#c0c0c4" stroke-width="1.5"/><path d="M1.5 12.5H10M1.5 15H10" stroke="#c0c0c4" stroke-width="1.5"/></svg>
<div class="r" style="left:77px;top:639.4px">Call GripperOpen</div>
<svg style="left:56.0px;top:661.2px" width="16" height="16" viewBox="0 0 16 16"><path d="M2.5 12L11.5 5.5" stroke="#d0c010" stroke-width="1.8"/><path d="M13 4.5L8.5 5.5L11 8.8Z" fill="#d0c010"/><circle cx="2.5" cy="12" r="2.6" fill="#505050"/><circle cx="2" cy="11.4" r="0.9" fill="#c0c0c0"/><circle cx="14" cy="4" r="2.3" fill="#e01010"/><circle cx="13.7" cy="3.6" r="0.8" fill="#ff9090"/></svg>
<div class="r" style="left:77px;top:660.2px">MoveL (Place Approa...</div>
<svg style="left:56.0px;top:682.0px" width="16" height="16" viewBox="0 0 16 16"><path d="M2.5 11Q4 8 7 8Q10 8 11 7.5Q13 6 13.5 4" stroke="#d0c010" stroke-width="1.8" fill="none"/><circle cx="2.5" cy="12" r="2.6" fill="#505050"/><circle cx="2" cy="11.4" r="0.9" fill="#c0c0c0"/><circle cx="14" cy="4" r="2.3" fill="#e01010"/><circle cx="13.7" cy="3.6" r="0.8" fill="#ff9090"/></svg>
<div class="r" style="left:77px;top:681.0px">MoveJ (Home)</div>
</body></html>
